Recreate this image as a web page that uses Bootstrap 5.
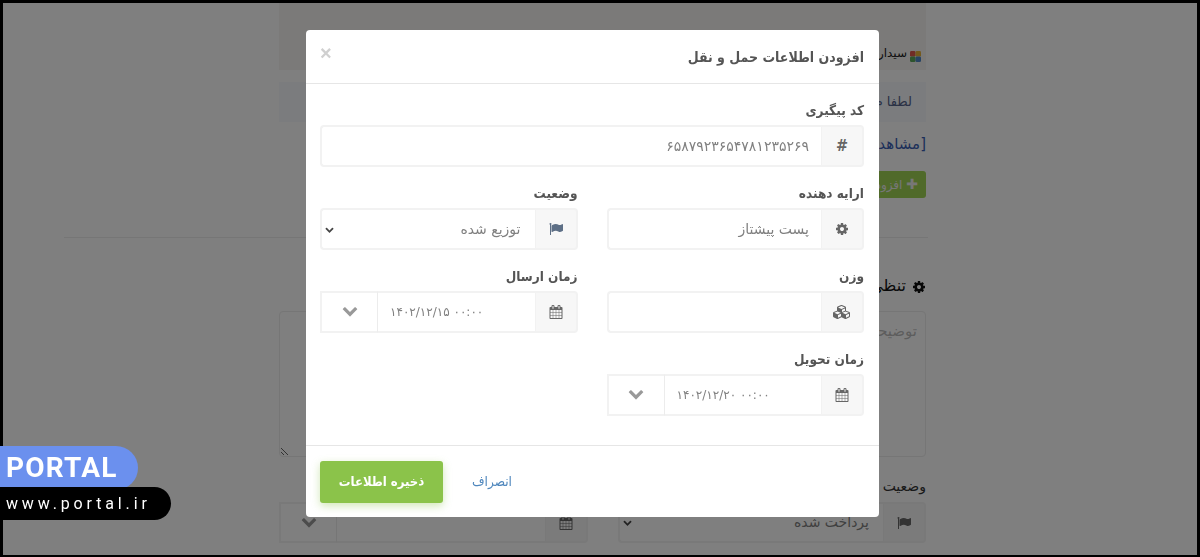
<!DOCTYPE html>
<html lang="fa" dir="rtl">
<head>
    <meta charset="UTF-8">
    <title>افزودن اطلاعات حمل و نقل</title>
    <link href="https://cdn.jsdelivr.net/npm/bootstrap@5.3.0/dist/css/bootstrap.min.css" rel="stylesheet">
    <style>
        html, body { height: 100%; overflow: hidden; }
        body { font-family: "DejaVu Sans Condensed", "DejaVu Sans", sans-serif; font-size: 14px; color: #555; background: #fff; }
        .ico { width: 14px; height: 14px; fill: currentColor; }
        .ico-wide { width: 18px; height: 16px; }
        .ico-flag { color: #5d6f86; }

        .page-frame { position: fixed; inset: 0; border: solid #000; border-width: 3px 3px 2px 3px; z-index: 1060; pointer-events: none; }

        /* page behind the dialog */
        .back-page { width: 864px; margin-right: 272px; padding-top: 3px; font-family: "DejaVu Sans", sans-serif; }
        .back-col { width: 647px; margin-right: 2px; }
        .back-top { height: 67px; background: #f7f5f2; font-size: 12px; color: #222; padding: 0 5px 8px 0; gap: 3px; }
        .back-note { height: 40px; margin-top: 12px; background: #f6f8fc; color: #54638a; padding-right: 14px; font-size: 13px; }
        .back-link { color: #3a5fb4; margin-top: 12px; height: 24px; line-height: 20px; font-size: 15px; }
        .back-btn { display: block; background: #a0d455; color: #eee; border: 0; height: 27px; width: 100px; border-radius: 3px; font-size: 12px; margin-top: 13px; text-align: right; padding: 0 8px 0 0; }
        .back-btn b { font-size: 14px; }
        .back-rule { border-top: 1px solid #ececec; margin-top: 39px; }
        .back-title { font-size: 16px; color: #111; margin-top: 36px; height: 37px; }
        .back-title .ico { width: 14px; height: 14px; margin-left: 1px; }
        .back-text.form-control { height: 146px; border: 1px solid #ececec; border-radius: 4px; padding: 8px 8px; font-size: 15px; }
        .back-text::placeholder { color: #bbb; }
        .back-label { font-size: 14px; margin-top: 19px; height: 26px; line-height: 20px; color: #333; }
        .back-row { width: 647px; gap: 30px; }
        .back-row > div { width: 308.500px; flex: 0 0 308.500px; }
        .back-row .field-group { height: 41px; }
        .back-row .field-group .form-select, .back-row .field-group .form-control { height: 41px; }

        /* dialog */
        .modal-backdrop.show { opacity: .5; }
        .form-dialog { max-width: none; width: 573px; margin: 30px 321px 0 0; }
        .form-dialog .modal-content { border: 0; border-radius: 4px; height: 487px; }
        .form-dialog .modal-header { height: 54px; padding: 0 15px; border-bottom: 1px solid #e6e6e6; }
        .dlg-title { font-size: 14px; font-weight: 700; color: #555; margin: 2px 0 0; }
        .dlg-close { font-family: "Liberation Sans", sans-serif; color: #d0d0d0; font-size: 20px; line-height: 1; font-weight: 700; margin: -7px 0 0 -1px; }
        .form-dialog .modal-body { padding: 16px 15px 0 14px; flex: 0 0 361px; height: 361px; }
        .form-dialog .modal-footer { justify-content: flex-end; gap: 29px; height: 72px; padding: 15px 15px 15px 14px; border-top: 1px solid #e6e6e6; flex-wrap: nowrap; }
        .form-dialog .row { --bs-gutter-x: 29px; --bs-gutter-y: 0; }

        .field-box { height: 83px; }
        .field-label { display: block; font-size: 13.500px; font-weight: 700; color: #555; height: 25px; line-height: 20px; margin: 0; }
        .field-group { height: 42px; flex-wrap: nowrap; }
        .field-group .input-group-text { width: 43px; justify-content: center; background: #f7f7f7; border: 2px solid #f2f2f2; border-left-width: 1px; color: #666; padding: 0; border-radius: 0 4px 4px 0 !important; margin: 0 !important; }
        .field-group .input-group-text .ico-flag { color: #5d6f86; }
        .field-group .form-control, .field-group .form-select { font-family: "DejaVu Sans", sans-serif; border: 2px solid #f2f2f2; border-right: 0; color: #808080; font-size: 14px; box-shadow: none; margin: 0 !important; height: 42px; }
        .field-group .form-control { border-radius: 4px 0 0 4px !important; padding: 0 12px; }
        .field-group .form-select { border-radius: 4px 0 0 4px !important; padding: 0 14px 0 30px; background-position: left 3px center; background-size: 9px 9px;
            background-image: url("data:image/svg+xml,%3csvg xmlns='http://www.w3.org/2000/svg' viewBox='0 0 1792 1792'%3e%3cpath fill='%23444' d='M1683 808l-742 741q-19 19-45 19t-45-19l-742-741q-19-19-19-45.500t19-45.500l166-166q19-19 45-19t45 19l531 531 531-531q19-19 45-19t45 19l166 166q19 19 19 45.500t-19 45.500z'/%3e%3c/svg%3e"); }
        .field-group .date-input.form-control { border-radius: 0 !important; flex: 1 1 auto; width: 157px; direction: ltr; text-align: left; font-size: 12px; border-right: 0; border-left: 1px solid #ececec; }
        .date-arrow { width: 57px; flex: 0 0 57px; display: flex; align-items: center; justify-content: center; border: 2px solid #f2f2f2; border-right: 0; border-radius: 4px 0 0 4px; color: #999; margin: 0 !important; }
        .date-arrow .ico { width: 16px; height: 16px; }
        .save-btn { width: 123px; height: 42px; margin: 0 !important; background: #8bc34a; border: 0; border-radius: 3px; color: #fff; font-size: 13px; font-weight: 700; box-shadow: 0 3px 8px rgba(139,195,74,.4); }
        .cancel-link { color: #4f87bd; text-decoration: none; font-size: 13.500px; margin: 0 !important; }

        /* site stamp */
        .stamp { position: fixed; left: 0; top: 446px; z-index: 1070; direction: ltr; }
        .stamp-name { width: 138px; height: 44px; background: #6b90ee; color: #fff; font-family: "Roboto", sans-serif; font-weight: 700; font-size: 28px; letter-spacing: 1.200px; line-height: 44px; padding-left: 6px; border-radius: 0 24px 24px 0; }
        .stamp-url { width: 171px; height: 33px; margin-top: -3px; position: relative; background: #000; color: #fff; font-family: "Roboto", sans-serif; font-size: 16px; letter-spacing: 3.850px; line-height: 33px; padding-left: 6px; border-radius: 0 17px 17px 0; }
    </style>
</head>
<body>
    <svg class="d-none">
        <symbol id="i-cog" viewBox="0 0 1792 1792"><path d="M1152 896q0-106-75-181t-181-75-181 75-75 181 75 181 181 75 181-75 75-181zm512-109v222q0 12-8 23t-20 13l-185 28q-19 54-39 91 35 50 107 138 10 12 10 25t-9 23q-27 37-99 108t-94 71q-12 0-26-9l-138-108q-44 23-91 38-16 136-29 186-7 28-36 28h-222q-14 0-24.500-8.500t-11.500-21.500l-28-184q-49-16-90-37l-141 107q-10 9-25 9-14 0-25-11-126-114-165-168-7-10-7-23 0-12 8-23 15-21 51-66.500t54-70.500q-27-50-41-99l-183-27q-13-2-21-12.500t-8-23.500v-222q0-12 8-23t19-13l186-28q14-46 39-92-40-57-107-138-10-12-10-24 0-10 9-23 26-36 98.500-107.500t94.500-71.500q13 0 26 10l138 107q44-23 91-38 16-136 29-186 7-28 36-28h222q14 0 24.500 8.500t11.500 21.500l28 184q49 16 90 37l142-107q9-9 24-9 13 0 25 10 129 119 165 170 7 8 7 22 0 12-8 23-15 21-51 66.500t-54 70.500q26 50 41 98l183 28q13 2 21 12.500t8 23.500z"/></symbol>
        <symbol id="i-cal" viewBox="0 0 1792 1792"><path d="M192 1664h288v-288h-288v288zm352 0h320v-288h-320v288zm-352-352h288v-320h-288v320zm352 0h320v-320h-320v320zm-352-384h288v-288h-288v288zm736 736h320v-288h-320v288zm-384-736h320v-288h-320v288zm768 736h288v-288h-288v288zm-384-352h320v-320h-320v320zm-352-864v-288q0-13-9.500-22.500t-22.500-9.500h-64q-13 0-22.500 9.500t-9.500 22.500v288q0 13 9.500 22.500t22.500 9.500h64q13 0 22.500-9.500t9.500-22.500zm736 864h288v-320h-288v320zm-384-384h320v-288h-320v288zm384 0h288v-288h-288v288zm32-480v-288q0-13-9.500-22.500t-22.500-9.500h-64q-13 0-22.500 9.500t-9.500 22.500v288q0 13 9.500 22.500t22.500 9.500h64q13 0 22.500-9.500t9.500-22.500zm384-64v1280q0 52-38 90t-90 38h-1408q-52 0-90-38t-38-90v-1280q0-52 38-90t90-38h128v-96q0-66 47-113t113-47h64q66 0 113 47t47 113v96h384v-96q0-66 47-113t113-47h64q66 0 113 47t47 113v96h128q52 0 90 38t38 90z"/></symbol>
        <symbol id="i-flag" viewBox="0 0 1792 1792"><path d="M320 256q0 72-64 110v1266q0 13-9.500 22.500t-22.500 9.500h-64q-13 0-22.500-9.500t-9.500-22.500v-1266q-64-38-64-110 0-53 37.500-90.500t90.500-37.500 90.500 37.500 37.500 90.500zm1472 64v763q0 25-12.500 38.500t-39.500 27.500q-215 116-369 116-61 0-123.500-22t-108.500-48-115.500-48-142.500-22q-192 0-464 146-17 9-33 9-26 0-45-19t-19-45v-742q0-32 31-55 21-14 79-43 236-120 421-120 107 0 200 29t219 88q38 19 88 19 54 0 117.500-21t110-47 88-47 54.500-21q26 0 45 19t19 45z"/></symbol>
        <symbol id="i-cubes" viewBox="0 0 2304 1792"><path d="M640 1632l384-192v-314l-384 164v342zm-64-454l404-173-404-173-404 173zm1088 454l384-192v-314l-384 164v342zm-64-454l404-173-404-173-404 173zm-448-293l384-165v-266l-384 164v267zm-64-379l441-189-441-189-441 189zm1088 518v416q0 36-19 67t-52 47l-448 224q-25 14-57 14t-57-14l-448-224q-4-2-7-4-2 2-7 4l-448 224q-25 14-57 14t-57-14l-448-224q-33-16-52-47t-19-67v-416q0-38 21.500-70t56.500-48l434-186v-400q0-38 21.500-70t56.500-48l448-192q23-10 50-10t50 10l448 192q35 16 56.500 48t21.500 70v400l434 186q36 16 57 48t21 70z"/></symbol>
        <symbol id="i-down" viewBox="0 180 1792 1792"><path d="M1683 808l-742 741q-19 19-45 19t-45-19l-742-741q-19-19-19-45.500t19-45.500l166-166q19-19 45-19t45 19l531 531 531-531q19-19 45-19t45 19l166 166q19 19 19 45.500t-19 45.500z"/></symbol>
    </svg>

    <div class="page-frame"></div>

    <div class="back-page">
        <div class="back-col">
            <div class="back-top d-flex align-items-end">
                <svg width="11" height="11" viewBox="0 0 4 4"><rect width="2" height="2" rx=".5" fill="#e0584f"/><rect x="2" width="2" height="2" rx=".5" fill="#e8b23a"/><rect y="2" width="2" height="2" rx=".5" fill="#5aa85a"/><rect x="2" y="2" width="2" height="2" rx=".5" fill="#4f86c6"/></svg>
                <span>سیدارو</span>
            </div>
            <div class="back-note d-flex align-items-center">لطفا م</div>
            <div class="back-link">[مشاهده</div>
            <button class="back-btn" type="button"><b>&#10010;</b> افزودن</button>
        </div>
        <div class="back-rule"></div>
        <div class="back-col">
            <div class="back-title"><svg class="ico"><use href="#i-cog"/></svg> تنظی</div>
            <textarea class="form-control back-text" placeholder="توضیحات"></textarea>
            <div class="back-label">وضعیت</div>
            <div class="back-row d-flex">
                <div class="input-group field-group">
                    <span class="input-group-text"><svg class="ico"><use href="#i-flag"/></svg></span>
                    <select class="form-select"><option>پرداخت شده</option></select>
                </div>
                <div class="input-group field-group">
                    <span class="input-group-text"><svg class="ico"><use href="#i-cal"/></svg></span>
                    <input type="text" class="form-control date-input">
                    <span class="date-arrow"><svg class="ico"><use href="#i-down"/></svg></span>
                </div>
            </div>
        </div>
    </div>

    <div class="modal-backdrop show"></div>

    <div class="modal d-block" tabindex="-1">
        <div class="modal-dialog form-dialog">
            <div class="modal-content">
                <div class="modal-header justify-content-between">
                    <h5 class="dlg-title">افزودن اطلاعات حمل و نقل</h5>
                    <span class="dlg-close">&times;</span>
                </div>
                <div class="modal-body">
                    <div class="field-box">
                        <label class="field-label">کد پیگیری</label>
                        <div class="input-group field-group">
                            <span class="input-group-text fw-bold fs-6">#</span>
                            <input type="text" class="form-control" value="۶۵۸۷۹۲۳۶۵۴۷۸۱۲۳۵۲۶۹">
                        </div>
                    </div>
                    <div class="row">
                        <div class="col-6">
                            <div class="field-box">
                                <label class="field-label">ارایه دهنده</label>
                                <div class="input-group field-group">
                                    <span class="input-group-text"><svg class="ico"><use href="#i-cog"/></svg></span>
                                    <input type="text" class="form-control" value="پست پیشتاز">
                                </div>
                            </div>
                        </div>
                        <div class="col-6">
                            <div class="field-box">
                                <label class="field-label">وضعیت</label>
                                <div class="input-group field-group">
                                    <span class="input-group-text"><svg class="ico ico-flag"><use href="#i-flag"/></svg></span>
                                    <select class="form-select"><option>توزیع شده</option></select>
                                </div>
                            </div>
                        </div>
                        <div class="col-6">
                            <div class="field-box">
                                <label class="field-label">وزن</label>
                                <div class="input-group field-group">
                                    <span class="input-group-text"><svg class="ico ico-wide"><use href="#i-cubes"/></svg></span>
                                    <input type="text" class="form-control">
                                </div>
                            </div>
                        </div>
                        <div class="col-6">
                            <div class="field-box">
                                <label class="field-label">زمان ارسال</label>
                                <div class="input-group field-group">
                                    <span class="input-group-text"><svg class="ico"><use href="#i-cal"/></svg></span>
                                    <input type="text" class="form-control date-input" value="۱۴۰۲/۱۲/۱۵ ۰۰:۰۰">
                                    <span class="date-arrow"><svg class="ico"><use href="#i-down"/></svg></span>
                                </div>
                            </div>
                        </div>
                        <div class="col-6">
                            <div class="field-box">
                                <label class="field-label">زمان تحویل</label>
                                <div class="input-group field-group">
                                    <span class="input-group-text"><svg class="ico"><use href="#i-cal"/></svg></span>
                                    <input type="text" class="form-control date-input" value="۱۴۰۲/۱۲/۲۰ ۰۰:۰۰">
                                    <span class="date-arrow"><svg class="ico"><use href="#i-down"/></svg></span>
                                </div>
                            </div>
                        </div>
                    </div>
                </div>
                <div class="modal-footer">
                    <a href="#" class="cancel-link">انصراف</a>
                    <button type="button" class="btn save-btn">ذخیره اطلاعات</button>
                </div>
            </div>
        </div>
    </div>

    <div class="stamp">
        <div class="stamp-name">PORTAL</div>
        <div class="stamp-url">www.portal.ir</div>
    </div>
</body>
</html>
